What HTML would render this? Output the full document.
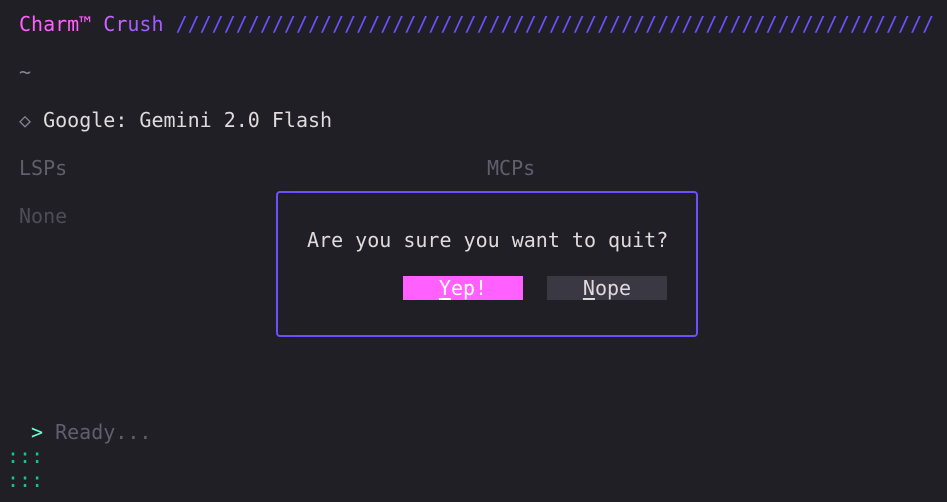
<!DOCTYPE html>
<html><head><meta charset="utf-8"><style>
html,body{margin:0;padding:0;background:#201f26;width:947px;height:502px;overflow:hidden}
body{font-family:"DejaVu Sans Mono","Liberation Mono",monospace;font-size:20px;line-height:24px;color:#dfdbdd;position:relative}
.a{position:absolute;white-space:pre;height:24px}
u{text-decoration:underline;text-underline-offset:3px}
</style></head><body>
<div class="a" style="left:19px;top:12px"><span style="color:#ff60ff">Charm™</span> <span style="color:#c864ff">Cr</span><span style="color:#a55cff">ush</span> <span style="color:#6b50ff">///////////////////////////////////////////////////////////////</span></div>
<div class="a" style="left:19px;top:60px;color:#858392">~</div>
<div class="a" style="left:19px;top:108px"><span style="color:#858392">◇</span> Google: Gemini 2.0 Flash</div>
<div class="a" style="left:19px;top:156px;color:#605f6b">LSPs</div>
<div class="a" style="left:487px;top:156px;color:#605f6b">MCPs</div>
<div class="a" style="left:19px;top:204px;color:#4d4c57">None</div>
<div style="position:absolute;left:276px;top:191px;width:418px;height:142px;border:2px solid #6b50ff;border-radius:4px;background:#201f26"></div>
<div class="a" style="left:307px;top:228px">Are you sure you want to quit?</div>
<div class="a" style="left:403px;top:276px;width:120px;background:#ff60ff;color:#fff;text-align:center"><u>Y</u>ep!</div>
<div class="a" style="left:547px;top:276px;width:120px;background:#3a3943;color:#dfdbdd;text-align:center"><u>N</u>ope</div>
<div class="a" style="left:31px;top:420px"><span style="color:#68ffd6">&gt;</span> <span style="color:#605f6b">Ready...</span></div>
<div class="a" style="left:7px;top:444px;color:#12c78f">:::</div>
<div class="a" style="left:7px;top:468px;color:#12c78f">:::</div>
</body></html>
